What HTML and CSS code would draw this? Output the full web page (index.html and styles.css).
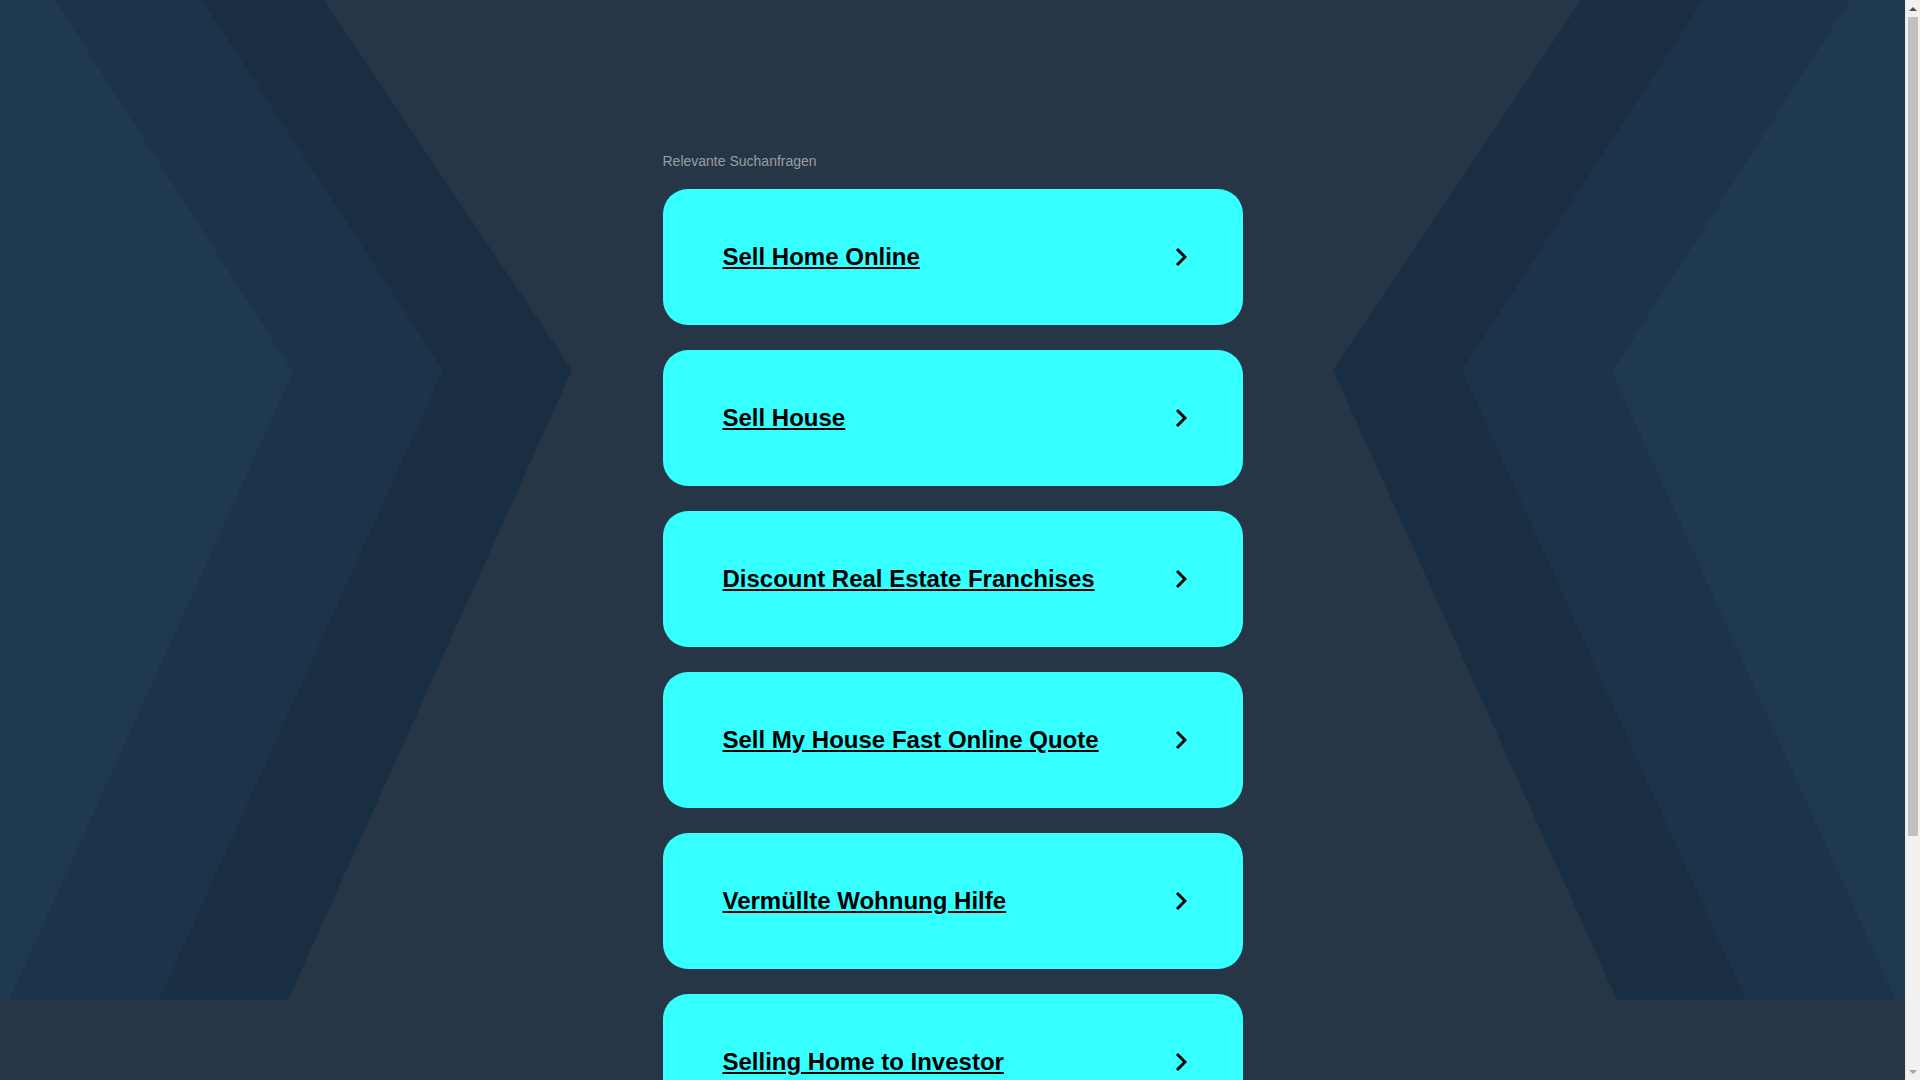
FILE: index.html
```html
<!DOCTYPE html>
<html lang="de">
<head>
<meta charset="utf-8">
<title>Relevante Suchanfragen</title>
<link rel="stylesheet" href="styles.css">
</head>
<body>
<div class="page">
  <div class="content">
    <div class="backdrop">
      <main class="main">
        <p class="label">Relevante Suchanfragen</p>
        <ul class="list">
          <li><a class="card" href="#"><span class="card-text">Sell Home Online</span><svg class="arrow" viewBox="0 0 12 20" width="12" height="20"><path d="M2 2 L10 10 L2 18"/></svg></a></li>
          <li><a class="card" href="#"><span class="card-text">Sell House</span><svg class="arrow" viewBox="0 0 12 20" width="12" height="20"><path d="M2 2 L10 10 L2 18"/></svg></a></li>
          <li><a class="card" href="#"><span class="card-text">Discount Real Estate Franchises</span><svg class="arrow" viewBox="0 0 12 20" width="12" height="20"><path d="M2 2 L10 10 L2 18"/></svg></a></li>
          <li><a class="card" href="#"><span class="card-text">Sell My House Fast Online Quote</span><svg class="arrow" viewBox="0 0 12 20" width="12" height="20"><path d="M2 2 L10 10 L2 18"/></svg></a></li>
          <li><a class="card" href="#"><span class="card-text">Vermüllte Wohnung Hilfe</span><svg class="arrow" viewBox="0 0 12 20" width="12" height="20"><path d="M2 2 L10 10 L2 18"/></svg></a></li>
          <li><a class="card" href="#"><span class="card-text">Selling Home to Investor</span><svg class="arrow" viewBox="0 0 12 20" width="12" height="20"><path d="M2 2 L10 10 L2 18"/></svg></a></li>
        </ul>
      </main>
    </div>
  </div>
  <div class="rail" aria-hidden="true">
    <span class="rail-btn"><span class="tri tri-up"></span></span>
    <span class="thumb"></span>
    <span class="rail-fill"></span>
    <span class="rail-btn"><span class="tri tri-down"></span></span>
  </div>
</div>
</body>
</html>
```

FILE: styles.css
```css
html, body {
  margin: 0;
  padding: 0;
  height: 100%;
  overflow: hidden;
}

body {
  background-color: #273646;
  font-family: "Liberation Sans", Arial, sans-serif;
}

.page {
  display: grid;
  grid-template-columns: 1fr 15px;
  height: 100vh;
}

.content {
  overflow-y: auto;
  overflow-x: hidden;
  scrollbar-width: none;
}

.content::-webkit-scrollbar {
  display: none;
}

.backdrop {
  min-height: 1380px;
  background-image: url("data:image/svg+xml,%3Csvg xmlns='http://www.w3.org/2000/svg' viewBox='0 0 1905 1000' preserveAspectRatio='none'%3E%3Cpolygon fill='%231a2e43' points='0,0 324,0 572,370 288,1000 0,1000'/%3E%3Cpolygon fill='%231d3349' points='0,0 202,0 443,370 159,1000 0,1000'/%3E%3Cpolygon fill='%231f3950' points='0,0 55,0 293,372 9,1000 0,1000'/%3E%3Cpolygon fill='%231a2e43' points='1905,0 1581,0 1333,370 1617,1000 1905,1000'/%3E%3Cpolygon fill='%231d3349' points='1905,0 1703,0 1462,370 1746,1000 1905,1000'/%3E%3Cpolygon fill='%231f3950' points='1905,0 1850,0 1612,372 1896,1000 1905,1000'/%3E%3C/svg%3E");
  background-repeat: no-repeat;
  background-position: top center;
  background-size: 100% 1000px;
}

.main {
  width: 580px;
  margin: 0 auto;
  padding-top: 153px;
}

.label {
  margin: 0 0 20px;
  font-size: 14px;
  line-height: 16px;
  color: #9a9ea3;
}

.list {
  list-style: none;
  margin: 0;
  padding: 0;
}

.list li {
  margin: 0 0 25px;
}

.card {
  box-sizing: border-box;
  height: 136px;
  display: flex;
  align-items: center;
  justify-content: space-between;
  padding: 0 56px 0 60px;
  border-radius: 25px;
  background: #36ffff;
  color: #000;
  text-decoration: none;
}

.card-text {
  font-size: 24px;
  font-weight: bold;
  line-height: 28px;
  color: #000;
  text-decoration: underline;
}

.arrow {
  flex: none;
  display: block;
}

.arrow path {
  fill: none;
  stroke: #000;
  stroke-width: 3;
}

/* scroll rail */
.rail {
  display: flex;
  flex-direction: column;
  background: #f1f1f1;
  border-left: 1px solid #e8e8e8;
  box-sizing: border-box;
}

.rail-btn {
  flex: none;
  height: 17px;
  display: flex;
  align-items: center;
  justify-content: center;
}

.tri {
  width: 0;
  height: 0;
  border-left: 4px solid transparent;
  border-right: 4px solid transparent;
}

.tri-up {
  border-bottom: 4px solid #505050;
}

.tri-down {
  border-top: 4px solid #a3a3a3;
}

.thumb {
  flex: none;
  height: 819px;
  margin: 0 2px;
  background: #c1c1c1;
}

.rail-fill {
  flex: 1;
}
```
